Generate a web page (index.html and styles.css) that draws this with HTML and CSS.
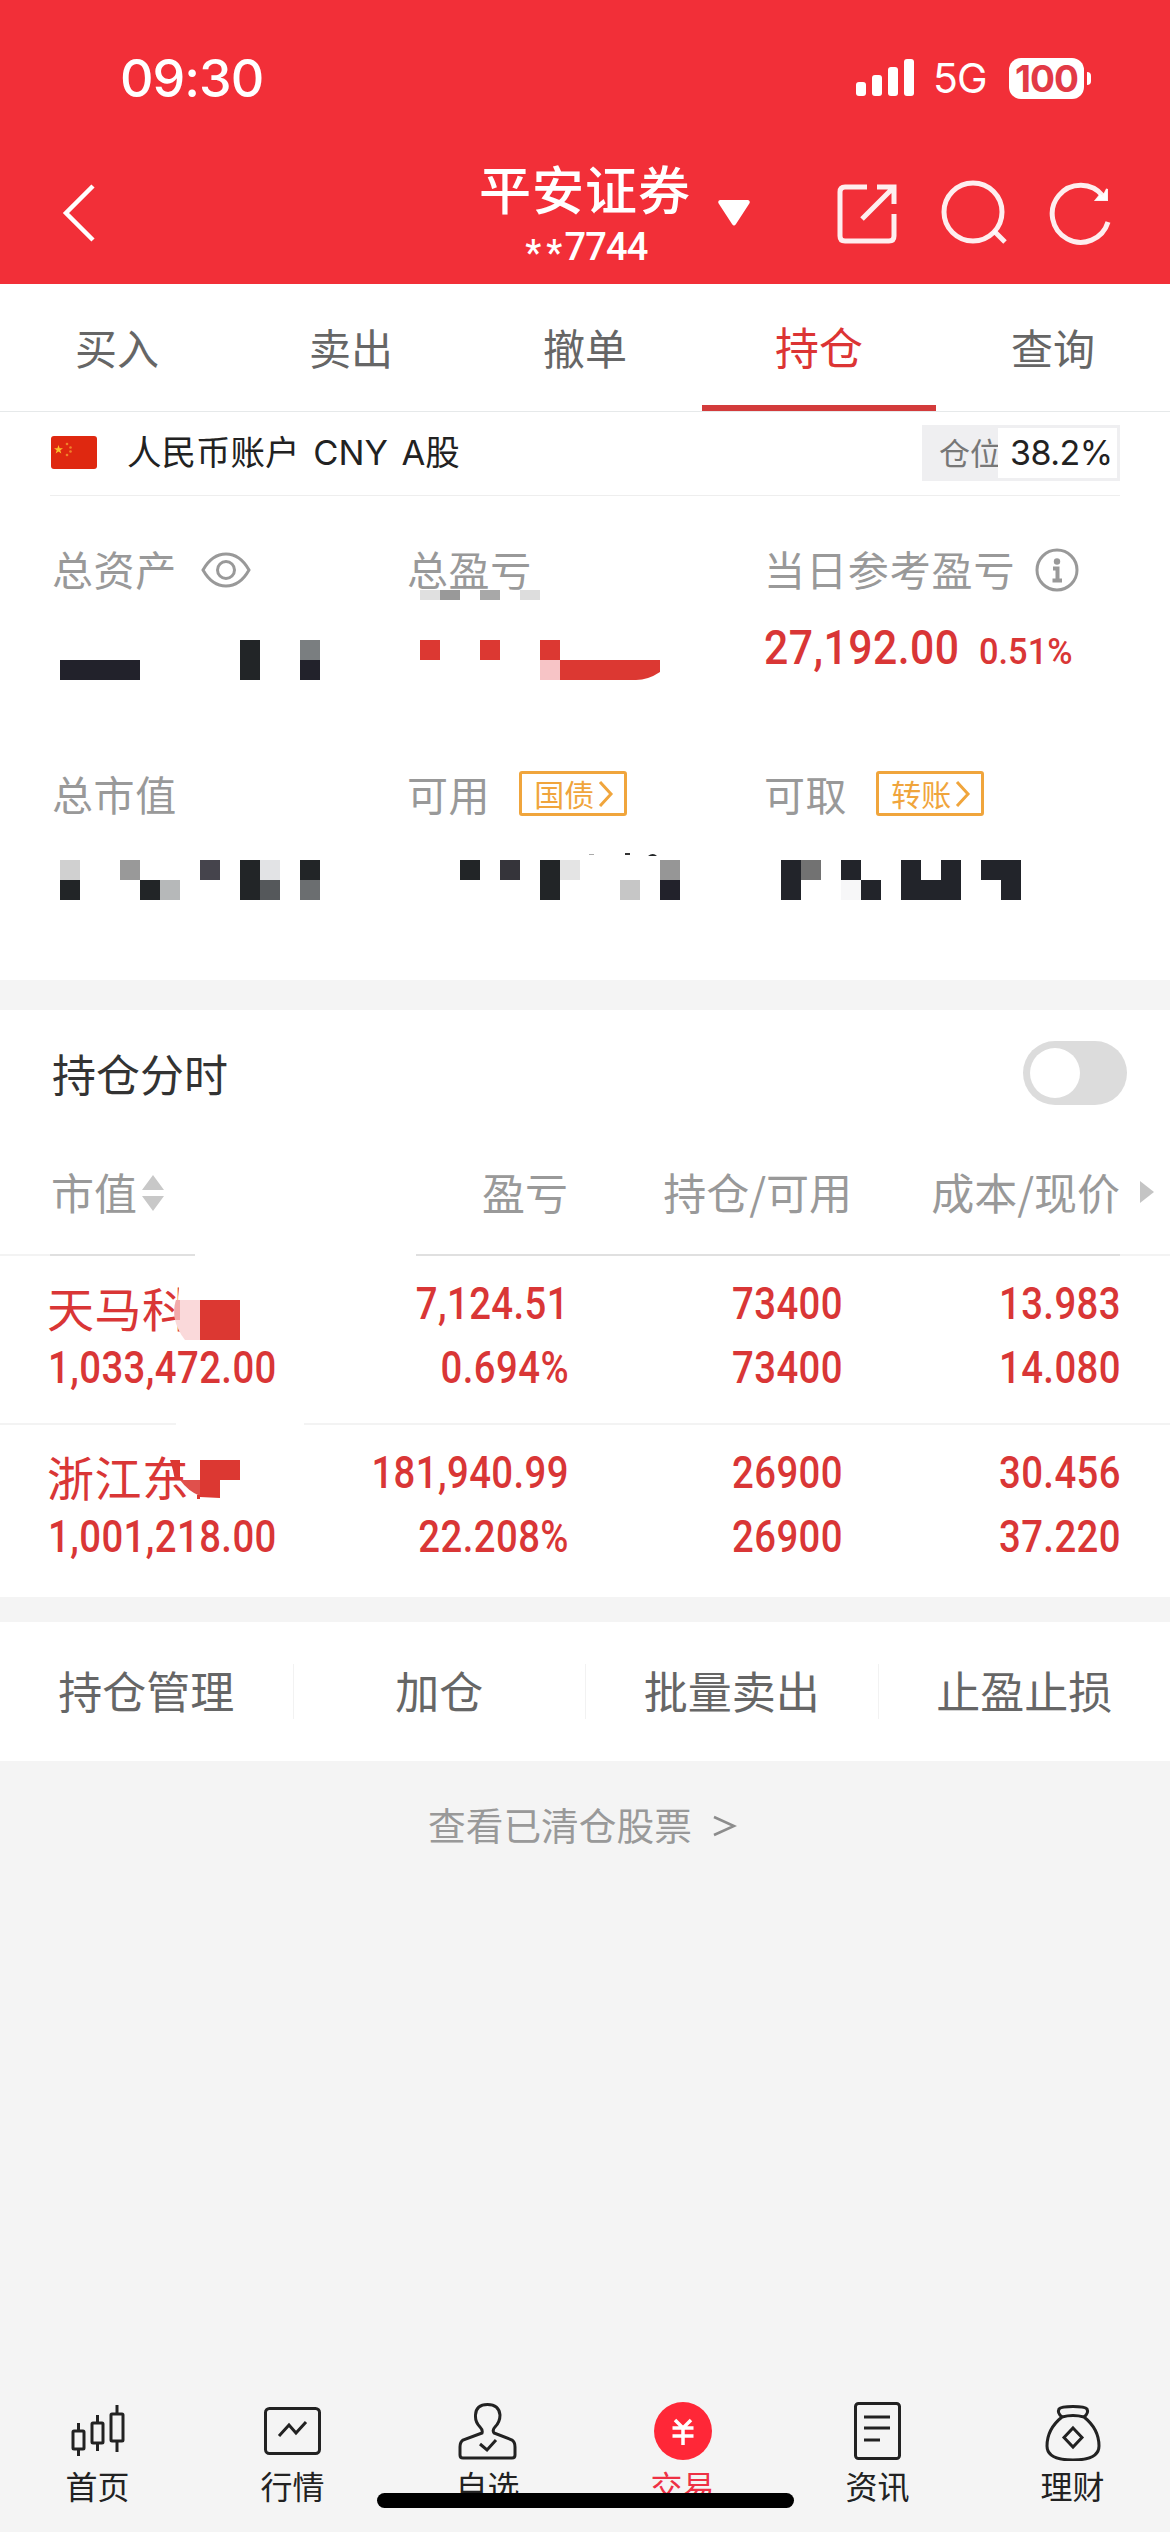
FILE: index.html
```html
<!DOCTYPE html>
<html lang="zh-CN">
<head>
	<meta charset="UTF-8">
	<title>持仓</title>
	<link rel="stylesheet" href="styles.css">
</head>
<body>

	<!-- 顶部 -->
	<div class="header">
		<div class="status">
			<div class="time">09:30</div>
			<svg class="signal" width="58" height="38" viewBox="0 0 58 38" fill="#fff">
				<rect x="0" y="23" width="10" height="14" rx="3"/>
				<rect x="16" y="16" width="10" height="21" rx="3"/>
				<rect x="32" y="8" width="10" height="29" rx="3"/>
				<rect x="48" y="0" width="10" height="37" rx="3"/>
			</svg>
			<div class="net">5G</div>
			<div class="battery">100</div>
			<div class="cap"></div>
		</div>
		<div class="navbar">
			<svg class="back" width="36" height="60" viewBox="0 0 36 60" fill="none" stroke="#fff" stroke-width="4.5">
				<path d="M32 3L5 30L32 57"/>
			</svg>
			<div class="title">
				<div class="name">平安证券</div>
				<div class="no"><i>*</i><i>*</i>7744</div>
			</div>
			<svg class="down" width="32" height="26" viewBox="0 0 32 26" fill="#fff">
				<path d="M2 0H30Q33 1 31 4L18 24Q16 27 14 24L1 4Q-1 1 2 0Z"/>
			</svg>
			<svg class="share" width="62" height="62" viewBox="0 0 62 62" fill="none" stroke="#fff" stroke-opacity=".92" stroke-width="5">
				<path d="M31 5H9Q4 5 4 10V54Q4 59 9 59H53Q58 59 58 54V32M41 5H58V22M58 5L26 37"/>
			</svg>
			<svg class="search" width="66" height="66" viewBox="0 0 66 66" fill="none" stroke="#fff" stroke-opacity=".92" stroke-width="5">
				<path d="M53 51L64 62"/>
				<circle cx="32" cy="32" r="29"/>
			</svg>
			<svg class="refresh" width="64" height="64" viewBox="0 0 64 64" fill="none" stroke="#fff" stroke-opacity=".92" stroke-width="5">
				<path d="M59 41A28.5 28.5 0 1 1 54 15"/>
				<path d="M58 8V19H47L51 14L54 16Z" fill="#fff" stroke-width="2"/>
			</svg>
		</div>
	</div>

	<div class="tabs">
		<div class="tab">买入</div>
		<div class="tab">卖出</div>
		<div class="tab">撤单</div>
		<div class="tab active">持仓</div>
		<div class="tab">查询</div>
	</div>

	<!-- 账户 -->
	<div class="account">
		<svg class="flag" width="46" height="33" viewBox="0 0 46 33">
			<rect width="46" height="33" rx="3" fill="#df2810"/>
			<path d="M7.5 9L8.6 12.2H12L9.3 14.2L10.3 17.4L7.5 15.4L4.7 17.4L5.7 14.2L3 12.2H6.4Z" fill="#fbc02d"/>
			<g fill="#f0842a"><circle cx="16" cy="8" r="1.3"/><circle cx="19.5" cy="11.5" r="1.3"/><circle cx="19.5" cy="15.5" r="1.3"/><circle cx="16" cy="19" r="1.3"/></g>
		</svg>
		<div class="accountName">人民币账户 CNY A股</div>
		<div class="rate"><span class="rateName">仓位</span><span class="rateNum">38.2%</span></div>
	</div>

	<!-- 资产 -->
	<div class="assets">
		<div class="cell">
			<div class="label">总资产
				<svg class="eye" width="50" height="38" viewBox="0 0 50 38" fill="none" stroke="#999" stroke-width="3">
					<path d="M2 19Q11 3 25 3T48 19Q39 35 25 35T2 19Z"/>
					<circle cx="25" cy="19" r="8.5"/>
				</svg>
			</div>
			<svg class="mosaic" width="320" height="40" viewBox="0 0 320 40">
				<rect x="8" y="20" width="80" height="20" fill="#22222b"/>
				<rect x="188" y="0" width="20" height="40" fill="#222527"/>
				<rect x="248" y="0" width="20" height="20" fill="#7a7e80"/>
				<rect x="248" y="20" width="20" height="20" fill="#22222b"/>
			</svg>
		</div>
		<div class="cell">
			<div class="label">总盈亏</div>
			<svg class="mosaic tall" width="320" height="90" viewBox="0 0 320 90">
				<rect x="13" y="0" width="20" height="10" fill="#e0e0e0"/>
				<rect x="33" y="0" width="20" height="10" fill="#999"/>
				<rect x="73" y="0" width="20" height="10" fill="#a8a8a8"/>
				<rect x="113" y="0" width="20" height="10" fill="#ddd"/>
				<g fill="#dc3832">
					<rect x="13" y="50" width="20" height="20"/>
					<rect x="73" y="50" width="20" height="20"/>
					<rect x="133" y="50" width="20" height="20"/>
					<path d="M153 70H253V82Q241 90 229 90H153Z"/>
				</g>
				<rect x="133" y="70" width="20" height="20" fill="#f7c4c6"/>
			</svg>
		</div>
		<div class="cell">
			<div class="label wide">当日参考盈亏
				<svg class="info" width="44" height="44" viewBox="0 0 44 44" fill="none" stroke="#999" stroke-width="3">
					<circle cx="22" cy="22" r="20"/>
					<circle cx="22" cy="13.5" r="3.2" fill="#999" stroke="none"/>
					<path d="M18 20.5H22.5V32M17.5 32.5H27" stroke-width="4"/>
				</svg>
			</div>
			<div class="profit"><b>27,192.00</b><span>0.51%</span></div>
		</div>
		<div class="cell">
			<div class="label second">总市值</div>
			<svg class="mosaic" width="320" height="40" viewBox="0 0 320 40">
				<rect x="8" y="0" width="20" height="20" fill="#d0d0d0"/>
				<rect x="8" y="20" width="20" height="20" fill="#222527"/>
				<rect x="68" y="0" width="20" height="20" fill="#999"/>
				<rect x="88" y="20" width="20" height="20" fill="#222527"/>
				<rect x="108" y="20" width="20" height="20" fill="#b6b8b9"/>
				<rect x="148" y="0" width="20" height="20" fill="#45444c"/>
				<rect x="188" y="0" width="20" height="40" fill="#222527"/>
				<rect x="208" y="0" width="20" height="20" fill="#e2e3e5"/>
				<rect x="208" y="20" width="20" height="20" fill="#55585b"/>
				<rect x="248" y="0" width="20" height="20" fill="#222527"/>
				<rect x="248" y="20" width="20" height="20" fill="#6b6e70"/>
			</svg>
		</div>
		<div class="cell">
			<div class="label second">可用
				<span class="tag">国债<svg width="16" height="28" viewBox="0 0 16 28" fill="none" stroke="#f0a53c" stroke-width="3"><path d="M2 2L13 14L2 26"/></svg></span>
			</div>
			<svg class="mosaic dots" width="320" height="47" viewBox="0 0 320 47">
				<path d="M182 1.5H187" stroke="#aaa" stroke-width="1"/>
				<path d="M218 1H223" stroke="#333" stroke-width="2"/>
				<path d="M241 3Q246 -1 250 3Z" fill="#222527"/>
				<rect x="53" y="7" width="20" height="20" fill="#222527"/>
				<rect x="93" y="7" width="20" height="20" fill="#35343a"/>
				<rect x="133" y="7" width="20" height="40" fill="#222527"/>
				<rect x="153" y="7" width="20" height="20" fill="#e4e4e4"/>
				<rect x="213" y="27" width="20" height="20" fill="#c6c6c6"/>
				<rect x="253" y="7" width="20" height="20" fill="#969696"/>
				<rect x="253" y="27" width="20" height="20" fill="#22222b"/>
			</svg>
		</div>
		<div class="cell">
			<div class="label second">可取
				<span class="tag">转账<svg width="16" height="28" viewBox="0 0 16 28" fill="none" stroke="#f0a53c" stroke-width="3"><path d="M2 2L13 14L2 26"/></svg></span>
			</div>
			<svg class="mosaic" width="320" height="40" viewBox="0 0 320 40" fill="#22242a">
				<rect x="17" y="0" width="20" height="40"/>
				<rect x="37" y="0" width="20" height="20" fill="#727272"/>
				<rect x="77" y="0" width="20" height="20"/>
				<rect x="77" y="20" width="20" height="20" fill="#f7f7f8"/>
				<rect x="97" y="20" width="20" height="20"/>
				<path d="M137 0H157V20H177V0H197V40H137Z"/>
				<path d="M217 0H257V40H237V20H217Z"/>
			</svg>
		</div>
	</div>

	<!-- 持仓列表 -->
	<div class="hold">
		<div class="holdTitle">
			<span>持仓分时</span>
			<div class="switch"></div>
		</div>
		<div class="row thead">
			<div class="c1">市值<svg width="22" height="36" viewBox="0 0 22 36" fill="#c8c8c8"><path d="M11 0L22 15H0ZM0 21H22L11 36Z"/></svg></div>
			<div class="c2">盈亏</div>
			<div class="c3">持仓/可用</div>
			<div class="c4">成本/现价</div>
			<svg class="more" width="14" height="22" viewBox="0 0 14 22" fill="#c4c4c4"><path d="M0 0L14 11L0 22Z"/></svg>
		</div>
		<div class="line">
			<div class="l1"></div>
			<div class="l2"></div>
		</div>
		<div class="row stock">
			<div class="c1">
				<div class="stockName">天马科</div>
				<div class="num">1,033,472.00</div>
				<svg class="cover" width="80" height="60" viewBox="0 0 80 60">
					<path d="M9 0H80V55H48Q40 57 34 55H24Q4 40 9 0Z" fill="#fff"/>
					<path d="M6 13H30V53H15Q0 34 6 13Z" fill="#fad9da"/>
					<path d="M6 13H10V33H5Q3 22 6 13Z" fill="#f2a9aa"/>
					<rect x="30" y="13" width="40" height="40" fill="#dc3832"/>
				</svg>
			</div>
			<div class="c2"><div class="num">7,124.51</div><div class="num">0.694%</div></div>
			<div class="c3"><div class="num">73400</div><div class="num">73400</div></div>
			<div class="c4"><div class="num">13.983</div><div class="num">14.080</div></div>
		</div>
		<div class="line light">
			<div class="l1"></div>
			<div class="l2"></div>
		</div>
		<div class="row stock">
			<div class="c1">
				<div class="stockName">浙江东</div>
				<div class="num">1,001,218.00</div>
				<svg class="cover" width="80" height="60" viewBox="0 0 80 60" fill="#dc3832">
					<path d="M0 4H10V24H5Q3 13 0 4Z"/>
					<path d="M10 24H30V40Q18 35 10 24Z" fill="#e0504c"/>
					<path d="M30 4H70V24H50V42L30 41Z"/>
					<rect x="27" y="39" width="3" height="4"/>
				</svg>
			</div>
			<div class="c2"><div class="num">181,940.99</div><div class="num">22.208%</div></div>
			<div class="c3"><div class="num">26900</div><div class="num">26900</div></div>
			<div class="c4"><div class="num">30.456</div><div class="num">37.220</div></div>
		</div>
	</div>

	<div class="actions">
		<div class="action">持仓管理</div>
		<div class="action">加仓</div>
		<div class="action">批量卖出</div>
		<div class="action">止盈止损</div>
	</div>

	<div class="cleared">查看已清仓股票<svg width="24" height="22" viewBox="0 0 24 22" fill="none" stroke="#8c8c8c" stroke-width="2.6"><path d="M1 2L21 11L1 20"/></svg></div>

	<!-- 底部导航 -->
	<div class="footer">
		<div class="item">
			<svg width="60" height="60" viewBox="0 0 60 60" fill="none" stroke="#222" stroke-width="3">
				<rect x="5" y="30" width="11" height="18" rx="1"/><path d="M10.500 22V30M10.500 48V55"/>
				<rect x="24" y="22" width="11" height="20" rx="1"/><path d="M29.500 14V22M29.500 42V50"/>
				<rect x="43" y="13" width="12" height="27" rx="1"/><path d="M49 4V13M49 40V51"/>
			</svg>
			<span>首页</span>
		</div>
		<div class="item">
			<svg width="60" height="60" viewBox="0 0 60 60" fill="none" stroke="#222" stroke-width="3">
				<rect x="2.500" y="7.500" width="54" height="45" rx="4"/>
				<path d="M16 35L26 24L33 32L43 21"/>
			</svg>
			<span>行情</span>
		</div>
		<div class="item">
			<svg width="60" height="60" viewBox="0 0 60 60" fill="none" stroke="#222" stroke-width="3">
				<path d="M24 32Q25 29 22 26Q17 21 17.500 14Q18 3.500 29.500 3.500T42 14Q42 21 37 26Q34 29 36 32L54 39Q57 41 57 46V54Q57 57 54 57H5Q2 57 2 54V46Q2 41 5 39Z"/>
				<path d="M22 43L29 49L38 39"/>
			</svg>
			<span>自选</span>
		</div>
		<div class="item on">
			<svg width="60" height="60" viewBox="0 0 60 60" fill="none" stroke="#fff" stroke-width="3.5">
				<circle cx="30" cy="30" r="29" fill="#ff2737" stroke="none"/>
				<path d="M22 19L30 27L38 19M19.500 27H40.500M19.500 35H40.500M30 26V44"/>
			</svg>
			<span>交易</span>
		</div>
		<div class="item">
			<svg width="60" height="60" viewBox="0 0 60 60" fill="none" stroke="#222" stroke-width="3">
				<rect x="7.500" y="2.500" width="44" height="55" rx="3"/>
				<path d="M16 16H42M16 27H42M16 39H32"/>
			</svg>
			<span>资讯</span>
		</div>
		<div class="item">
			<svg width="60" height="60" viewBox="0 0 60 60" fill="none" stroke="#222" stroke-width="3">
				<path d="M19 16Q14 12 16 8Q18 5.500 30 5.500T44 8Q46 12 41 16"/>
				<path d="M19 16Q30 13 41 16Q56 28 56 45Q56 59 30 59T4 45Q4 28 19 16Z"/>
				<path d="M30 27L39 36.500L30 46L21 36.500Z"/>
			</svg>
			<span>理财</span>
		</div>
		<div class="homeBar"></div>
	</div>

</body>
</html>
```
FILE: styles.css
```css
* {
	margin: 0;
	padding: 0;
	box-sizing: border-box;
}
body {
	width: 1170px;
	height: 2532px;
	display: flex;
	flex-direction: column;
	overflow: hidden;
	background-color: #f4f4f4;
	font-family: "Noto Sans CJK SC", sans-serif;
	color: #222;
}
svg {
	display: block;
	flex: none;
}

/*顶部红色区域*/
.header {
	height: 284px;
	background-color: #f22f38;
	color: #fff;
}
.status {
	height: 156px;
	padding: 0 79px 0 120px;
	display: flex;
	align-items: center;
	font-family: Inter, sans-serif;
}
.time {
	width: 736px;
	font-size: 52px;
	font-weight: 500;
	letter-spacing: -1px;
}
.net {
	margin-left: 19px;
	width: 76px;
	font-size: 41px;
	letter-spacing: -1px;
}
.battery {
	width: 75px;
	height: 41px;
	border-radius: 12px;
	background-color: #fff;
	color: #e23a46;
	font-size: 37px;
	font-weight: 700;
	line-height: 41px;
	text-align: center;
	letter-spacing: -1px;
}
.cap {
	margin-left: 3px;
	width: 4px;
	height: 13px;
	border-radius: 0 6px 6px 0;
	background-color: #fff;
}
.navbar {
	height: 128px;
	padding-bottom: 14px;
	padding-left: 61px;
	display: flex;
	align-items: center;
}
.title {
	margin-left: 362px;
	margin-top: 6px;
	width: 252px;
	text-align: center;
}
.name {
	font-size: 52px;
	font-weight: 500;
	line-height: 60px;
	letter-spacing: 1px;
}
.no {
	font-family: Roboto, sans-serif;
	font-size: 38px;
	font-weight: 500;
	line-height: 58px;
	letter-spacing: -0.8px;
	height: 56px;
}
.no i {
	display: inline-block;
	width: 21px;
	font-size: 36px;
	font-style: normal;
	line-height: 30px;
	vertical-align: -5px;
}
.down {
	margin-left: 7px;
}
.share {
	margin-left: 86px;
}
.search {
	margin-left: 43px;
}
.refresh {
	margin-left: 42px;
}
.back {
	margin-top: 0;
}

/*选项卡*/
.tabs {
	height: 128px;
	display: flex;
	background-color: #fff;
	border-bottom: 1px solid #e6e9ea;
}
.tab {
	width: 234px;
	font-size: 42px;
	line-height: 125px;
	text-align: center;
	color: #666;
}
.active {
	border-bottom: 6px solid #d33b3b;
	font-size: 44px;
	color: #dc3434;
}

/*账户*/
.account {
	height: 84px;
	padding: 0 50px 3px 51px;
	display: flex;
	align-items: center;
	background: linear-gradient(#eee, #eee) 50px 83px / 1070px 1px no-repeat #fff;
}
.accountName {
	margin-left: 30px;
	flex: 1;
	font-family: Inter, "Noto Sans CJK SC", sans-serif;
	font-size: 34.500px;
	line-height: 83px;
	word-spacing: 4px;
}
.rate {
	width: 198px;
	height: 56px;
	display: flex;
	padding: 3px;
	background-color: #efeff1;
	line-height: 50px;
}
.rateName {
	width: 73px;
	padding-left: 14px;
	font-size: 31px;
	line-height: 48px;
	color: #777;
	white-space: nowrap;
}
.rateNum {
	flex: 1;
	padding-left: 12px;
	background-color: #fff;
	font-family: Inter, sans-serif;
	font-size: 34px;
	letter-spacing: -0.5px;
}

/*资产*/
.assets {
	height: 484px;
	padding: 40px 0 0 52px;
	display: grid;
	grid-template-columns: 355px 357px 1fr;
	grid-template-rows: 220px 1fr;
	background-color: #fff;
}
.label {
	height: 68px;
	padding-bottom: 5px;
	display: flex;
	align-items: center;
	font-size: 41px;
	letter-spacing: 0.6px;
	color: #999;
	white-space: nowrap;
}
.wide {
	letter-spacing: 0.9px;
}
.second {
	padding-top: 5px;
	padding-bottom: 0;
}
.mosaic {
	margin-top: 36px;
}
.tall {
	margin-top: -14px;
}
.dots {
	margin-top: 29px;
}
.eye {
	margin-left: 24px;
	margin-top: 4px;
}
.info {
	margin-left: 20px;
	margin-top: 4px;
}
.profit {
	height: 90px;
	display: flex;
	align-items: baseline;
	font-family: Roboto, sans-serif;
	font-weight: 500;
	color: #d93636;
}
/*数字字体偏窄，横向压缩*/
.profit b {
	width: 215px;
	font-size: 48px;
	font-weight: 500;
	line-height: 88px;
	letter-spacing: 0.5px;
	transform: scaleX(0.89);
	transform-origin: left;
}
.profit span {
	font-size: 37px;
	transform: scaleX(0.93);
	transform-origin: left;
}
.tag {
	margin-left: 29px;
	margin-top: 2px;
	width: 108px;
	height: 45px;
	padding-left: 12px;
	padding-bottom: 2px;
	display: flex;
	align-items: center;
	border: 3px solid #f0a53c;
	border-radius: 3px;
	font-size: 30px;
	line-height: 28px;
	letter-spacing: 0;
	color: #f0a53c;
}
.tag svg {
	margin-left: 4px;
	margin-top: 2px;
}

/*持仓列表*/
.hold {
	margin-top: 30px;
	height: 587px;
	background-color: #fff;
}
.holdTitle {
	height: 126px;
	padding: 0 43px 0 52px;
	display: flex;
	align-items: center;
	justify-content: space-between;
	font-size: 44px;
	color: #333;
}
.switch {
	width: 104px;
	height: 64px;
	padding: 7px;
	border-radius: 32px;
	background-color: #dcdcdc;
}
.switch:before {
	content: "";
	display: block;
	width: 50px;
	height: 50px;
	border-radius: 50%;
	background-color: #fff;
}
.row {
	display: flex;
}
.c1 {
	width: 300px;
	padding-left: 47px;
	position: relative;
}
.c2 {
	width: 268px;
	text-align: right;
}
.c3 {
	width: 274px;
	text-align: right;
}
.c4 {
	width: 278px;
	text-align: right;
}
.thead {
	height: 118px;
	padding-bottom: 7px;
	font-size: 43px;
	line-height: 111px;
	color: #999;
	align-items: center;
}
.thead .c1 {
	display: flex;
	align-items: center;
	padding-left: 51px;
}
.thead .c1 svg {
	margin-left: 5px;
	margin-top: 2px;
}
.thead .c3 {
	width: 284px;
}
.thead .c4 {
	width: 268px;
}
.more {
	margin-left: 20px;
	margin-top: 1px;
}
.line {
	height: 2px;
	display: flex;
	justify-content: space-between;
}
.l1 {
	width: 195px;
	background: linear-gradient(to right, #f3f3f3 50px, #e0e0e0 50px);
}
.l2 {
	width: 754px;
	background: linear-gradient(to right, #e0e0e0 704px, #f3f3f3 704px);
}
.light .l1 {
	width: 176px;
	background: #f3f3f3;
}
.light .l2 {
	width: 866px;
	background: #f3f3f3;
}
.stock {
	height: 167px;
	padding-top: 16px;
	color: #d93636;
}
.stockName {
	height: 64px;
	font-size: 47px;
	line-height: 69px;
	letter-spacing: 0.500px;
}
.num {
	height: 64px;
	font-family: Roboto, sans-serif;
	font-size: 44px;
	font-weight: 500;
	line-height: 64px;
	letter-spacing: 0.5px;
	transform: translateX(1px) scaleX(0.87);
	transform-origin: right;
}
.c1 .num {
	transform-origin: left;
}
/*盖在股票名上的马赛克*/
.cover {
	position: absolute;
	left: 170px;
	top: 15px;
}

.actions {
	margin-top: 25px;
	height: 139px;
	display: flex;
	align-items: center;
	background-color: #fff;
}
.action {
	width: 292.500px;
	height: 55px;
	border-left: 1px solid #f2f2f2;
	font-size: 44px;
	line-height: 52px;
	text-align: center;
	color: #666;
}
.action:first-child {
	border-left: 0;
}
.cleared {
	height: 130px;
	padding-left: 428px;
	padding-bottom: 5px;
	display: flex;
	align-items: center;
	font-size: 37.700px;
	color: #999;
}
.cleared svg {
	margin-left: 21px;
	margin-top: 5px;
}

/*底部导航*/
.footer {
	position: relative;
	margin-top: auto;
	height: 131px;
	display: flex;
}
.item {
	width: 195px;
	display: flex;
	flex-direction: column;
	align-items: center;
	font-size: 32px;
	line-height: 48px;
}
.on {
	color: #ee3044;
}
.homeBar {
	position: absolute;
	left: 377px;
	top: 92px;
	width: 417px;
	height: 15px;
	border-radius: 8px;
	background-color: #000;
}
```
